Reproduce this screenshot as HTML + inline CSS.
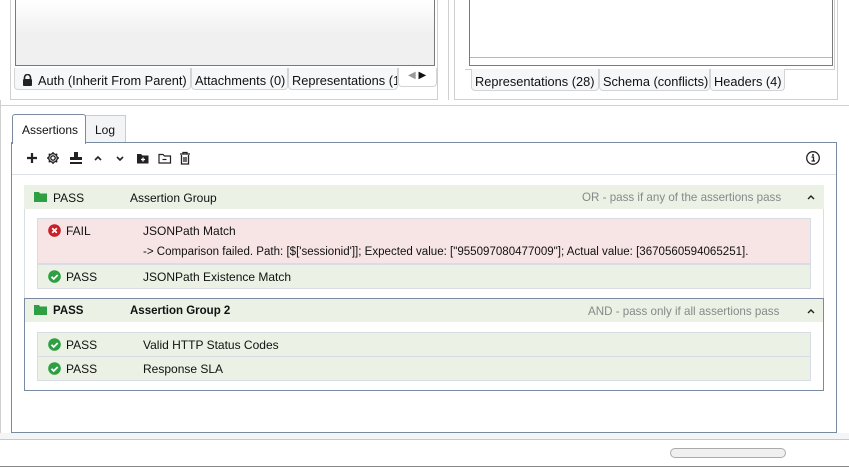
<!DOCTYPE html>
<html><head><meta charset="utf-8"><style>
*{box-sizing:border-box;margin:0;padding:0}
body{width:849px;height:467px;background:#fff;font-family:"Liberation Sans",sans-serif;font-size:12px;color:#111;position:relative;overflow:hidden}
.a{position:absolute}
.tab{position:absolute;height:22px;border:1px solid #d4d4d4;border-top:none;border-radius:0 0 4px 4px;background:#f6f7f8;padding:5px 0 0 3px;white-space:nowrap;overflow:hidden;font-size:12.8px}
.row{position:absolute;border:1px solid #d8dde5;background:#ebf1e4;height:25px}
.row span{position:absolute;top:5px}
.ic{position:absolute;top:5px}
</style></head><body>
<!-- top left -->
<div class="a" style="left:0;top:0;width:11px;height:100px;border-right:1px solid #d0d0d0"></div>
<div class="a" style="left:11px;top:0;width:427px;height:100px;border-right:1px solid #d0d0d0;border-bottom:1px solid #d0d0d0"></div>
<div class="a" style="left:15px;top:0;width:420px;height:66px;border:1px solid #7a7a7a;border-top:none;background:linear-gradient(#fff 0,#f0f0f0 35px,#f0f0f0)"></div>
<div class="tab" style="left:14px;top:68px;width:177px;padding-left:7px"><svg width="11" height="12" viewBox="0 0 11 12" style="vertical-align:-1px;margin-right:5px"><path d="M2.5 5V3.5a3 3 0 0 1 6 0V5" fill="none" stroke="#222" stroke-width="1.6"/><rect x="1" y="5" width="9" height="7" rx="1" fill="#222"/></svg>Auth (Inherit From Parent)</div>
<div class="tab" style="left:191px;top:68px;width:97px">Attachments (0)</div>
<div class="tab" style="left:288px;top:68px;width:110px">Representations (1</div>
<div class="a" style="left:398px;top:68px;width:39px;height:19px;background:#fff;border:1px solid #d4d4d4;border-top:none;border-radius:0 0 4px 4px;font-size:10px;padding:2px 0 0 9px;color:#999">◀ <span style="color:#111">▶</span></div>
<!-- top right -->
<div class="a" style="left:448px;top:0;width:1px;height:100px;background:#d0d0d0"></div>
<div class="a" style="left:454px;top:0;width:384px;height:100px;border-left:1px solid #d0d0d0;border-right:1px solid #d0d0d0;border-bottom:1px solid #d0d0d0"></div>
<div class="a" style="left:465px;top:0;width:370px;height:70px;border-right:1px solid #d0d0d0;border-bottom:1px solid #d0d0d0"></div>
<div class="a" style="left:469px;top:0;width:364px;height:66px;border:1px solid #7a7a7a;border-top:none;background:#fff"></div>
<div class="a" style="left:470px;top:57px;width:362px;height:8px;border-top:1px solid #b0b8c4;background:#fff"></div>
<div class="tab" style="left:471px;top:69px;width:128px">Representations (28)</div>
<div class="tab" style="left:599px;top:69px;width:111px">Schema (conflicts)</div>
<div class="tab" style="left:710px;top:69px;width:75px">Headers (4)</div>
<div class="a" style="left:0;top:105px;width:849px;height:1px;background:#d0d0d0"></div>
<!-- assertions tabs -->
<div class="a" style="left:12px;top:114px;width:74px;height:30px;border:1px solid #7a8aa0;border-bottom:none;border-radius:3px 3px 0 0;background:#fff;padding:8px 0 0 9px;z-index:2">Assertions</div>
<div class="a" style="left:85px;top:115px;width:41px;height:28px;border:1px solid #c8ccd2;border-bottom:none;background:#f3f4f6;padding:7px 0 0 9px">Log</div>
<div class="a" style="left:11px;top:142px;width:826px;height:291px;border:1px solid #7a8aa0;background:#fff"></div>
<!-- toolbar -->
<svg class="a" style="left:24px;top:150px" width="175" height="16" viewBox="0 0 175 16">
<path d="M8 3v10M3 8h10" stroke="#222" stroke-width="2.2"/>
<g transform="translate(29,8)" fill="none" stroke="#222" stroke-width="1.4"><circle r="2.2"/><path d="M0-6v2M0 4v2M-6 0h2M4 0h2M-4.2-4.2l1.4 1.4M2.8 2.8l1.4 1.4M-4.2 4.2l1.4-1.4M2.8-2.8l1.4-1.4"/><circle r="4.3"/></g>
<path d="M50 2h4v5h4v3h-12v-3h4zM46 12h12v2h-12z" fill="#222"/>
<path d="M71 10l3-3 3 3" fill="none" stroke="#222" stroke-width="1.6"/>
<path d="M93 7l3 3 3-3" fill="none" stroke="#222" stroke-width="1.6"/>
<path d="M113 4h4l1.5 1.5h6v8h-11.5z" fill="#222"/><path d="M119 7.5v4M117 9.5h4" stroke="#fff" stroke-width="1.3"/>
<path d="M135 4.5h4l1.5 1.5h6v7h-11.5z" fill="none" stroke="#222" stroke-width="1.2"/><path d="M138.5 9.5h4" stroke="#222" stroke-width="1.2"/>
<path d="M156 4h10M159 4v-1.5h4v1.5M157.5 5v9h7v-9M160 7v5M162 7v5" fill="none" stroke="#222" stroke-width="1.3"/>
</svg>
<svg class="a" style="left:805px;top:150px" width="16" height="16"><circle cx="8" cy="8" r="6.3" fill="none" stroke="#222" stroke-width="1.3"/><circle cx="8" cy="5" r="1" fill="#222"/><path d="M6.5 7h2v4M6.5 11h3.5" stroke="#222" stroke-width="1.3" fill="none"/></svg>
<div class="a" style="left:12px;top:174px;width:824px;height:1px;background:#dde1e7"></div>
<!-- group 1 -->
<div class="a" style="left:24px;top:185px;width:800px;height:114px;border:1px solid #d8dde5;border-bottom:none"></div>
<div class="row" style="left:24px;top:185px;width:800px;height:24px;border:none">
<svg class="ic" style="left:10px;top:6px" width="13" height="11"><path d="M0 1h5l1 1.5h7v8.5h-13z" fill="#2ea043"/></svg>
<span style="left:29px;top:6px">PASS</span><span style="left:106px;top:6px">Assertion Group</span><span style="left:558px;top:6px;color:#888;font-size:11.6px">OR - pass if any of the assertions pass</span>
<svg class="ic" style="left:783px;top:9px" width="8" height="6"><path d="M1 5l3-3 3 3" fill="none" stroke="#222" stroke-width="1.4"/></svg></div>
<div class="row" style="left:37px;top:218px;width:774px;height:46px;background:#f7e4e4">
<svg class="ic" style="left:10px;top:5px" width="13" height="13"><circle cx="6.5" cy="6.5" r="6.3" fill="#c8202a"/><path d="M4.2 4.2l4.6 4.6M8.8 4.2l-4.6 4.6" stroke="#fff" stroke-width="1.8"/></svg>
<span style="left:28px">FAIL</span><span style="left:105px">JSONPath Match</span>
<span style="left:105px;top:27px;font-size:11.55px">-&gt; Comparison failed. Path: [$['sessionid']]; Expected value: ["955097080477009"]; Actual value: [3670560594065251].</span></div>
<div class="row" style="left:37px;top:264px;width:774px;height:25px">
<svg class="ic" style="left:10px;top:5px" width="13" height="13"><circle cx="6.5" cy="6.5" r="6.3" fill="#2ea043"/><path d="M3.5 6.8l2.2 2.2 4-4" fill="none" stroke="#fff" stroke-width="1.8"/></svg>
<span style="left:28px">PASS</span><span style="left:105px">JSONPath Existence Match</span></div>
<!-- group 2 -->
<div class="a" style="left:24px;top:298px;width:800px;height:93px;border:1px solid #7a8aa0"></div>
<div class="row" style="left:25px;top:299px;width:798px;height:23px;border:none">
<svg class="ic" style="left:9px;top:5px" width="13" height="11"><path d="M0 1h5l1 1.5h7v8.5h-13z" fill="#2ea043"/></svg>
<span style="left:28px;top:6px;font-weight:bold;font-size:11.5px">PASS</span><span style="left:105px;top:6px;font-weight:bold;font-size:11.5px">Assertion Group 2</span><span style="left:563px;top:6px;color:#888;font-size:11.6px">AND - pass only if all assertions pass</span>
<svg class="ic" style="left:782px;top:9px" width="8" height="6"><path d="M1 5l3-3 3 3" fill="none" stroke="#222" stroke-width="1.4"/></svg></div>
<div class="row" style="left:37px;top:332px;width:774px;height:25px">
<svg class="ic" style="left:10px;top:5px" width="13" height="13"><circle cx="6.5" cy="6.5" r="6.3" fill="#2ea043"/><path d="M3.5 6.8l2.2 2.2 4-4" fill="none" stroke="#fff" stroke-width="1.8"/></svg>
<span style="left:28px">PASS</span><span style="left:105px">Valid HTTP Status Codes</span></div>
<div class="row" style="left:37px;top:356px;width:774px;height:25px">
<svg class="ic" style="left:10px;top:5px" width="13" height="13"><circle cx="6.5" cy="6.5" r="6.3" fill="#2ea043"/><path d="M3.5 6.8l2.2 2.2 4-4" fill="none" stroke="#fff" stroke-width="1.8"/></svg>
<span style="left:28px">PASS</span><span style="left:105px">Response SLA</span></div>
<!-- bottom -->
<div class="a" style="left:0;top:100px;width:1px;height:333px;background:#d0d0d0"></div>
<div class="a" style="left:0;top:433px;width:849px;height:7px;background:#f3f5f7;border-bottom:1px solid #c8c8c8"></div>
<div class="a" style="left:0;top:466px;width:849px;height:1px;background:#888"></div>
<div class="a" style="left:670px;top:448px;width:116px;height:10px;border:1px solid #aaa;border-radius:5px;background:#f0f0f0"></div>
</body></html>
